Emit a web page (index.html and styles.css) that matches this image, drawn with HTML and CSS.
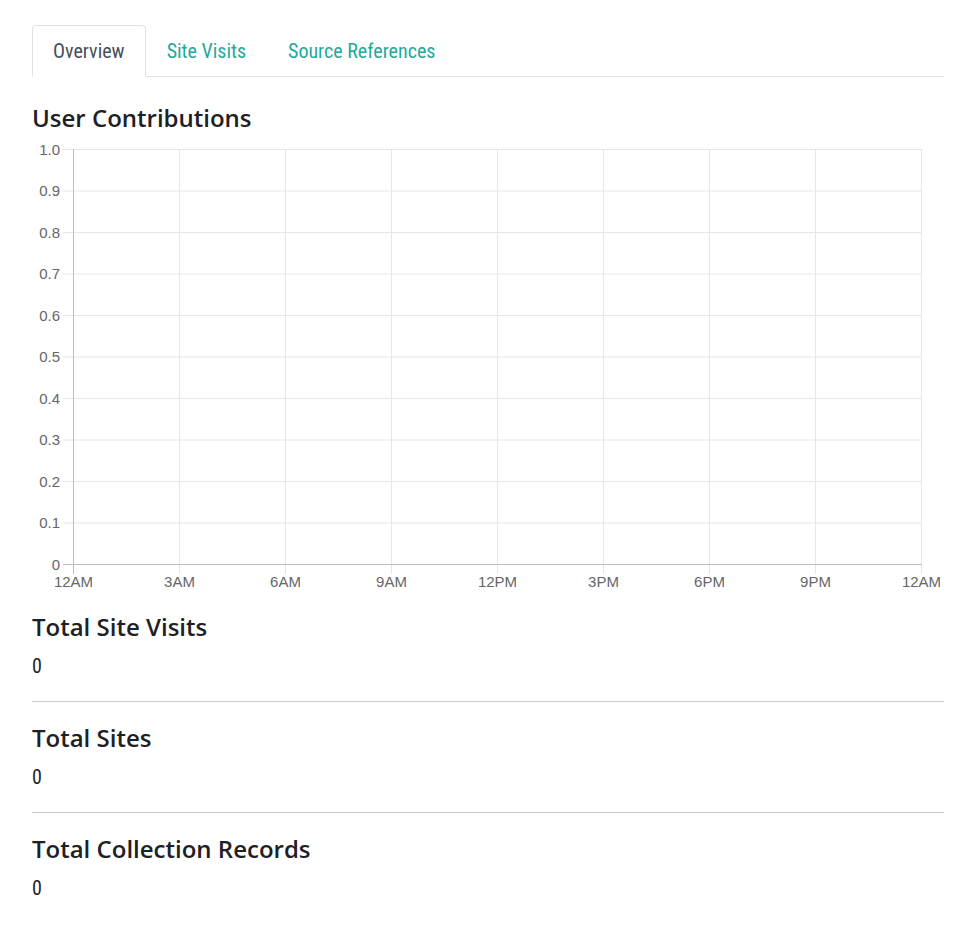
FILE: index.html
```html
<!DOCTYPE html>
<html>
<head>
<meta charset="utf-8">
<link rel="stylesheet" href="styles.css">
</head>
<body>
<div class="page">
  <ul class="tabs">
    <li class="tab active"><a>Overview</a></li>
    <li class="tab"><a>Site Visits</a></li>
    <li class="tab"><a>Source References</a></li>
  </ul>

  <h2 class="title">User Contributions</h2>

  <svg class="chart" width="912" height="462" viewBox="0 0 912 462" xmlns="http://www.w3.org/2000/svg">
    <g class="grid">
      <line x1="31" y1="11.5" x2="889" y2="11.5"/>
      <line x1="31" y1="53" x2="889" y2="53"/>
      <line x1="31" y1="94.5" x2="889" y2="94.5"/>
      <line x1="31" y1="136" x2="889" y2="136"/>
      <line x1="31" y1="177.5" x2="889" y2="177.5"/>
      <line x1="31" y1="219" x2="889" y2="219"/>
      <line x1="31" y1="260.5" x2="889" y2="260.5"/>
      <line x1="31" y1="302" x2="889" y2="302"/>
      <line x1="31" y1="343.5" x2="889" y2="343.5"/>
      <line x1="31" y1="385" x2="889" y2="385"/>
      <line x1="147.5" y1="11" x2="147.5" y2="436"/>
      <line x1="253.5" y1="11" x2="253.5" y2="436"/>
      <line x1="359.5" y1="11" x2="359.5" y2="436"/>
      <line x1="465.5" y1="11" x2="465.5" y2="436"/>
      <line x1="571.5" y1="11" x2="571.5" y2="436"/>
      <line x1="677.5" y1="11" x2="677.5" y2="436"/>
      <line x1="783.5" y1="11" x2="783.5" y2="436"/>
      <line x1="889.5" y1="11" x2="889.5" y2="436"/>
    </g>
    <g class="axis">
      <line x1="41.5" y1="11" x2="41.5" y2="436"/>
      <line x1="31" y1="426.5" x2="890" y2="426.5"/>
    </g>
    <g class="ylabels">
      <text x="28" y="16.5">1.0</text>
      <text x="28" y="58">0.9</text>
      <text x="28" y="99.5">0.8</text>
      <text x="28" y="141">0.7</text>
      <text x="28" y="182.5">0.6</text>
      <text x="28" y="224">0.5</text>
      <text x="28" y="265.5">0.4</text>
      <text x="28" y="307">0.3</text>
      <text x="28" y="348.5">0.2</text>
      <text x="28" y="390">0.1</text>
      <text x="28" y="431.5">0</text>
    </g>
    <g class="xlabels">
      <text x="41.5" y="449">12AM</text>
      <text x="147.5" y="449">3AM</text>
      <text x="253.5" y="449">6AM</text>
      <text x="359.5" y="449">9AM</text>
      <text x="465.5" y="449">12PM</text>
      <text x="571.5" y="449">3PM</text>
      <text x="677.5" y="449">6PM</text>
      <text x="783.5" y="449">9PM</text>
      <text x="889.5" y="449">12AM</text>
    </g>
  </svg>

  <section class="stat">
    <h3 class="stat-title">Total Site Visits</h3>
    <p class="stat-value">0</p>
  </section>
  <hr class="divider">
  <section class="stat after-divider">
    <h3 class="stat-title">Total Sites</h3>
    <p class="stat-value">0</p>
  </section>
  <hr class="divider">
  <section class="stat after-divider">
    <h3 class="stat-title">Total Collection Records</h3>
    <p class="stat-value">0</p>
  </section>
</div>
</body>
</html>
```

FILE: styles.css
```css
html, body {
  margin: 0;
  padding: 0;
  background: #fff;
}

.page {
  width: 912px;
  margin-left: 32px;
  padding-top: 25px;
  color: #212529;
}

.tabs {
  display: flex;
  list-style: none;
  margin: 0;
  padding: 0;
  border-bottom: 1px solid #dee2e6;
}

.tab {
  margin-bottom: -1px;
}

.tab a {
  display: block;
  padding: 12px 20px 12px;
  line-height: 26px;
  font-family: "Roboto", sans-serif;
  font-stretch: condensed;
  font-size: 20px;
  color: #1fa99b;
  border: 1px solid transparent;
  border-radius: 4px 4px 0 0;
}

.tab.active a {
  color: #495057;
  background: #fff;
  border-color: #dee2e6 #dee2e6 #fff;
}

.title {
  margin: 26px 0 0;
  font-family: "Open Sans", sans-serif;
  font-weight: 600;
  font-size: 24px;
  line-height: 30px;
  color: #1d2125;
}

.chart {
  display: block;
  margin-top: 5px;
}

.grid line {
  stroke: #e6e6e6;
  stroke-width: 1;
}

.axis line {
  stroke: #bdbdbd;
  stroke-width: 1;
}

.ylabels text {
  font-family: "Liberation Sans", Arial, sans-serif;
  font-size: 15px;
  fill: #666;
  text-anchor: end;
}

.xlabels text {
  font-family: "Liberation Sans", Arial, sans-serif;
  font-size: 15px;
  fill: #666;
  text-anchor: middle;
}

.stat {
  padding-top: 12px;
}

.stat.after-divider {
  padding-top: 21px;
}

.stat-title {
  margin: 0;
  font-family: "Open Sans", sans-serif;
  font-weight: 600;
  font-size: 24px;
  line-height: 30px;
  color: #1d2125;
}

.stat-value {
  margin: 11px 0 0;
  font-family: "Roboto", sans-serif;
  font-stretch: condensed;
  font-size: 20px;
  line-height: 26px;
  color: #212529;
}

.divider {
  border: 0;
  border-top: 1px solid #c8c8c8;
  margin: 22px 0 0;
}
```
